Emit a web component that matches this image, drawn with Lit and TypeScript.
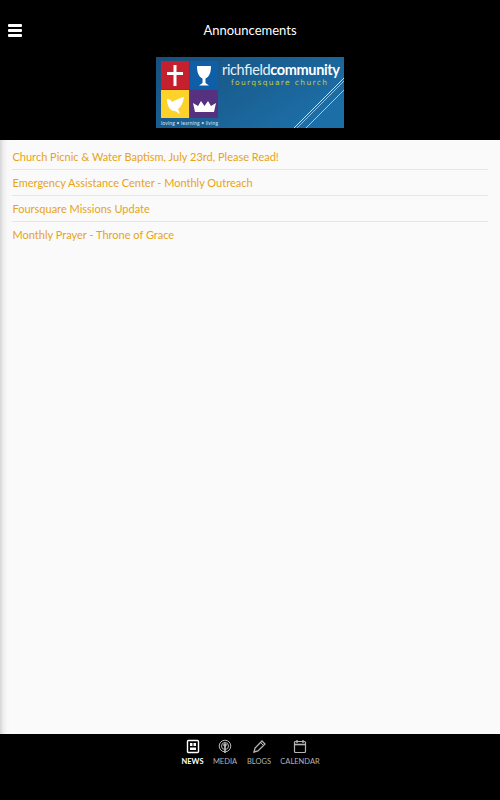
import { LitElement, html, css, svg } from "lit";
import { customElement } from "lit/decorators.js";

const ITEMS = [
  "Church Picnic & Water Baptism, July 23rd, Please Read!",
  "Emergency Assistance Center - Monthly Outreach",
  "Foursquare Missions Update",
  "Monthly Prayer - Throne of Grace",
];

const logo = svg`<svg class="logo" width="188" height="71" viewBox="0 0 188 71" xmlns="http://www.w3.org/2000/svg">
  <defs><linearGradient id="bg" x1="0" y1="0" x2="1" y2="0.6"><stop offset="0" stop-color="#17507f"/><stop offset="0.6" stop-color="#1a6296"/><stop offset="1" stop-color="#1c6ea6"/></linearGradient></defs>
  <rect width="188" height="71" fill="url(#bg)"/>
  <rect x="5" y="4" width="28" height="28" fill="#c4202e"/>
  <rect x="34" y="4" width="28" height="28" fill="#0f5ea8"/>
  <rect x="5" y="33" width="28" height="28" fill="#fdd22b"/>
  <rect x="34" y="33" width="28" height="28" fill="#56317f"/>
  <path d="M17.5 8h3v7h6.500v3h-6.500v11h-3v-11h-6.500v-3h6.500z" fill="#fff"/>
  <path d="M41 9h14c0 7-2 11-5.500 12.500v4.500l3.500 2.500h-10l3.500-2.500v-4.500C43 20 41 16 41 9z" fill="#fff"/>
  <path d="M11 42c3 0 4 1 5 3 2-1 5-3 12-5-1 6-3 10-6 12l2 5-5-3c-3 0-6-2-7-6-1-2-1-4-1-6z" fill="#fff"/>
  <path d="M39 55l-2-9 5 3 3-5 3.500 5 3.500-5 3 5 5-3-2 9z" fill="#fff"/>
  <text x="66" y="18" class="t1" fill="#e8f0f6" textLength="118">richfield<tspan font-weight="700" fill="#fff">community</tspan></text>
  <text x="75" y="28" class="t2" fill="#c3cf3a" textLength="97">fourqsquare church</text>
  <text x="5" y="68" class="t3" fill="#d5e3ee" textLength="57">loving • learning • living</text>
  <g stroke="#cfe2ef" fill="none"><path d="M138 71L188 21" stroke-width="1"/><path d="M141 71L188 24" stroke-width="0.700"/><path d="M150 71L188 33" stroke-width="0.800"/></g>
</svg>`;

@customElement("app-root")
export class AppRoot extends LitElement {
  static styles = css`
    :host { display: flex; flex-direction: column; height: 800px; width: 500px; overflow: hidden; font-family: Lato, "Liberation Sans", sans-serif; background: #000; }
    .top { height: 45px; padding-top: 0; background: #000; color: #fff; display: grid; grid-template-columns: 44px 1fr 44px; align-items: center; box-sizing: border-box; padding-top: 15px; }
    .burger { display: flex; flex-direction: column; gap: 2px; margin-left: 8px; width: 14px; }
    .burger i { display: block; height: 3px; background: #fff; border-radius: 1px; }
    .title { text-align: center; font-size: 13px; line-height: 30px; }
    .banner { height: 95px; background: #000; display: flex; justify-content: center; padding-top: 12px; box-sizing: border-box; }
    .logo { display: block; }
    .t1 { font: 400 14.500px Lato, sans-serif; }
    .t2 { font: 400 7.500px "DejaVu Sans", sans-serif; letter-spacing: 1px; }
    .t3 { font: 400 5px Lato, sans-serif; }
    .content { flex: 1; background: linear-gradient(to right, #d4d4d4 0, #ececec 3px, #f8f8f8 7px, #fafafa 12px); padding: 4px 12px 0; }
    .row { height: 26px; line-height: 26px; border-bottom: 1px solid #e6e6e6; box-sizing: border-box; font-size: 11px; color: #e8a317; padding-left: 0.500px; white-space: nowrap; }
    .row:last-child { border-bottom: none; }
    .tabs { height: 66px; background: #000; display: flex; justify-content: center; gap: 0; padding-top: 5px; box-sizing: border-box; }
    .tab { display: flex; flex-direction: column; align-items: center; color: #b4b4b4; font-size: 7.500px; line-height: 10px; }
    .tab svg { display: block; margin-bottom: 3px; }
    .tab.on { color: #fff; font-weight: 700; }
    .news { width: 31px; margin-left: 1px; }
    .media { width: 34px; margin-left: 0; }
    .blogs { width: 34px; }
    .calendar { width: 48px; margin-left: 0; }
  `;

  render() {
    return html`
      <div class="top">
        <div class="burger"><i></i><i></i><i></i></div>
        <div class="title">Announcements</div>
        <div></div>
      </div>
      <div class="banner">${logo}</div>
      <div class="content">
        ${ITEMS.map((t) => html`<div class="row">${t}</div>`)}
      </div>
      <div class="tabs">
        <div class="tab on news">
          <svg width="14" height="15" viewBox="0 0 14 15"><rect x="1.500" y="1.500" width="11" height="12" rx="1" fill="none" stroke="#fff" stroke-width="1.400"/><rect x="4" y="4" width="2.500" height="3" fill="#fff"/><rect x="7.500" y="4" width="2.500" height="3" fill="#fff"/><rect x="4" y="8.500" width="6" height="2.500" fill="#fff"/></svg>
          NEWS
        </div>
        <div class="tab media">
          <svg width="14" height="15" viewBox="0 0 14 15" fill="none" stroke="#b4b4b4"><circle cx="7" cy="7" r="5.800"/><circle cx="7" cy="7" r="3.500"/><circle cx="7" cy="6" r="1.300" fill="#b4b4b4"/><path d="M7 7v7" stroke-width="1.800"/></svg>
          MEDIA
        </div>
        <div class="tab blogs">
          <svg width="15" height="15" viewBox="0 0 15 15" fill="none" stroke="#b4b4b4"><path d="M2 13l1-4 7-7 3 3-7 7z" stroke-width="1.300"/><path d="M8.500 3.500l3 3" /></svg>
          BLOGS
        </div>
        <div class="tab calendar">
          <svg width="14" height="15" viewBox="0 0 14 15" fill="none" stroke="#b4b4b4"><rect x="1.500" y="2.500" width="11" height="11" rx="1" stroke-width="1.200"/><path d="M1.500 5.500h11" stroke-width="1.600"/><path d="M4 1v3M10 1v3" stroke-width="1.300"/></svg>
          CALENDAR
        </div>
      </div>
    `;
  }
}
